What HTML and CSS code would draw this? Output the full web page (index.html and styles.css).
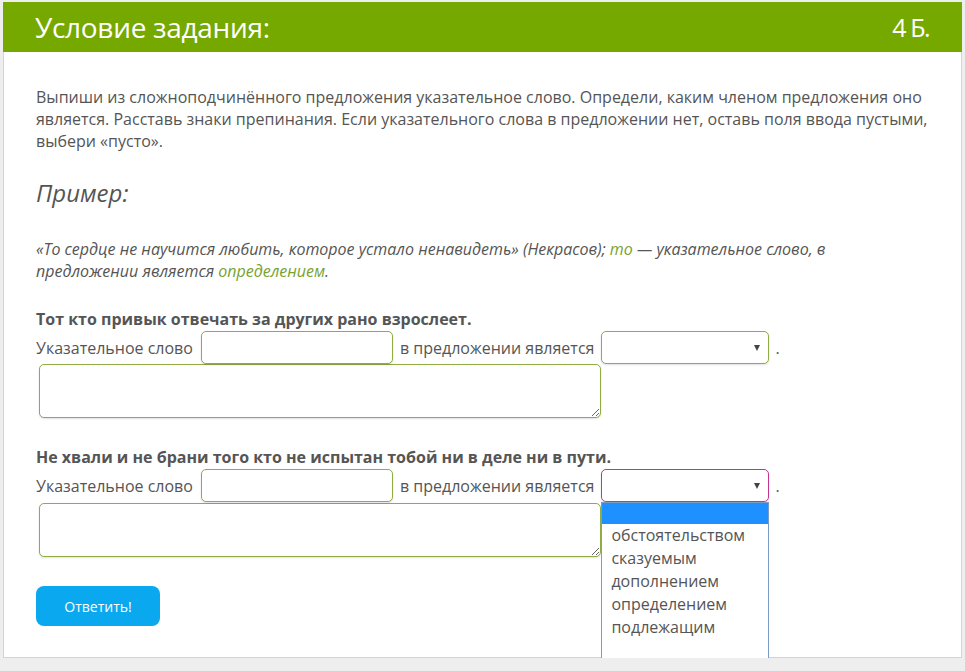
FILE: index.html
```html
<!doctype html>
<html>
<head>
	<meta charset="utf-8">
	<title>Условие задания</title>
	<link rel="stylesheet" href="styles.css">
</head>
<body>
	<div class="card">
		<div class="card-head">
			<span class="card-title">Условие задания:</span>
			<span class="card-score">4 Б.</span>
		</div>
		<div class="card-body">
			<p class="task">Выпиши из сложноподчинённого предложения указательное слово. Определи, каким членом предложения оно является. Расставь знаки препинания. Если указательного слова в предложении нет, оставь поля ввода пустыми, выбери «пусто».</p>

			<h2 class="example-title">Пример:</h2>
			<p class="example">«То сердце не научится любить, которое устало ненавидеть» (Некрасов); <span class="hl">то</span> — указательное слово, в предложении является <span class="hl">определением</span>.</p>

			<form class="answers">
				<div class="item">
					<p class="sentence">Тот кто привык отвечать за других рано взрослеет.</p>
					<div class="row">
						<span>Указательное слово</span>
						<input type="text" class="word">
						<span>в предложении является</span>
						<span class="pick"><select><option></option></select></span>
						<span>.</span>
					</div>
					<textarea class="copy"></textarea>
				</div>

				<div class="item">
					<p class="sentence">Не хвали и не брани того кто не испытан тобой ни в деле ни в пути.</p>
					<div class="row">
						<span>Указательное слово</span>
						<input type="text" class="word">
						<span>в предложении является</span>
						<span class="pick open">
							<select><option></option></select>
							<ul class="options">
								<li class="current"></li>
								<li>обстоятельством</li>
								<li>сказуемым</li>
								<li>дополнением</li>
								<li>определением</li>
								<li>подлежащим</li>
							</ul>
						</span>
						<span>.</span>
					</div>
					<textarea class="copy"></textarea>
				</div>

				<button type="button" class="submit">Ответить!</button>
			</form>
		</div>
	</div>
</body>
</html>
```

FILE: styles.css
```css
* {margin:0; padding:0; box-sizing:border-box;}
body {background:#eeeeee; font-family:"Open Sans", "Noto Sans", sans-serif; color:#555; font-size:16px;}

.card {margin:2px 3px 0 3px; height:656px; background:#fff; border:1px solid #d4d4d4; border-top:0;}
.card-head {height:50px; background:#76a900; color:#fff; display:flex; align-items:center; justify-content:space-between; padding:0 33px 0 32px; margin:0 -1px;}
.card-title {font-size:28px; letter-spacing:-0.3px;}
.card-score {font-size:25px; letter-spacing:-1.5px;}

.card-body {padding:34px 32px 0 32px;}
.task {line-height:22px; font-size:16px;}

.example-title {font-size:24px; font-weight:normal; font-style:italic; line-height:32px; margin-top:25px;}
.example {font-style:italic; font-size:16px; line-height:22px; margin-top:29px; max-width:860px;}
.hl {color:#78a22f;}

.item {margin-top:26px;}
.item + .item {margin-top:28px;}
.sentence {font-weight:bold; line-height:22px;}
.row {display:flex; align-items:center; gap:7px; height:33px; margin-top:1px;}
.row .word {width:192px; height:33px; margin-left:1px;}
input.word, .pick select, textarea.copy {border:1px solid #8fac45; border-radius:5px; background:#fff; font:inherit; color:#555; box-shadow:0 1px 2px rgba(0,0,0,0.12);}
.pick {position:relative; display:inline-block;}
.pick select {appearance:none; -webkit-appearance:none; width:168px; height:33px; padding:0 24px 0 8px; outline:none;}
.pick::after {content:""; position:absolute; right:9px; top:14px; border-left:3.5px solid transparent; border-right:3.5px solid transparent; border-top:6px solid #444; pointer-events:none;}
.pick.open select {border-color:#c2368f;}
.row > span:last-child {margin-left:-1px;}

textarea.copy {display:block; width:562px; height:54px; margin:0 0 0 3px; resize:vertical;}
.item + .item textarea.copy {margin-top:1px;}

.options {position:absolute; left:0; top:33px; width:168px; height:157px; background:#fff; border:1px solid #7c9cc4; list-style:none; z-index:2;}
.options li {line-height:23px; padding-left:9px; font-size:16px;}
.options li.current {background:#1e90ff; height:21px;}

.submit {display:block; margin-top:29px; width:124px; height:40px; border:0; border-radius:8px; background:#0aa8ee; color:#fff; font-family:"Open Sans", sans-serif; font-size:14px;}
```
